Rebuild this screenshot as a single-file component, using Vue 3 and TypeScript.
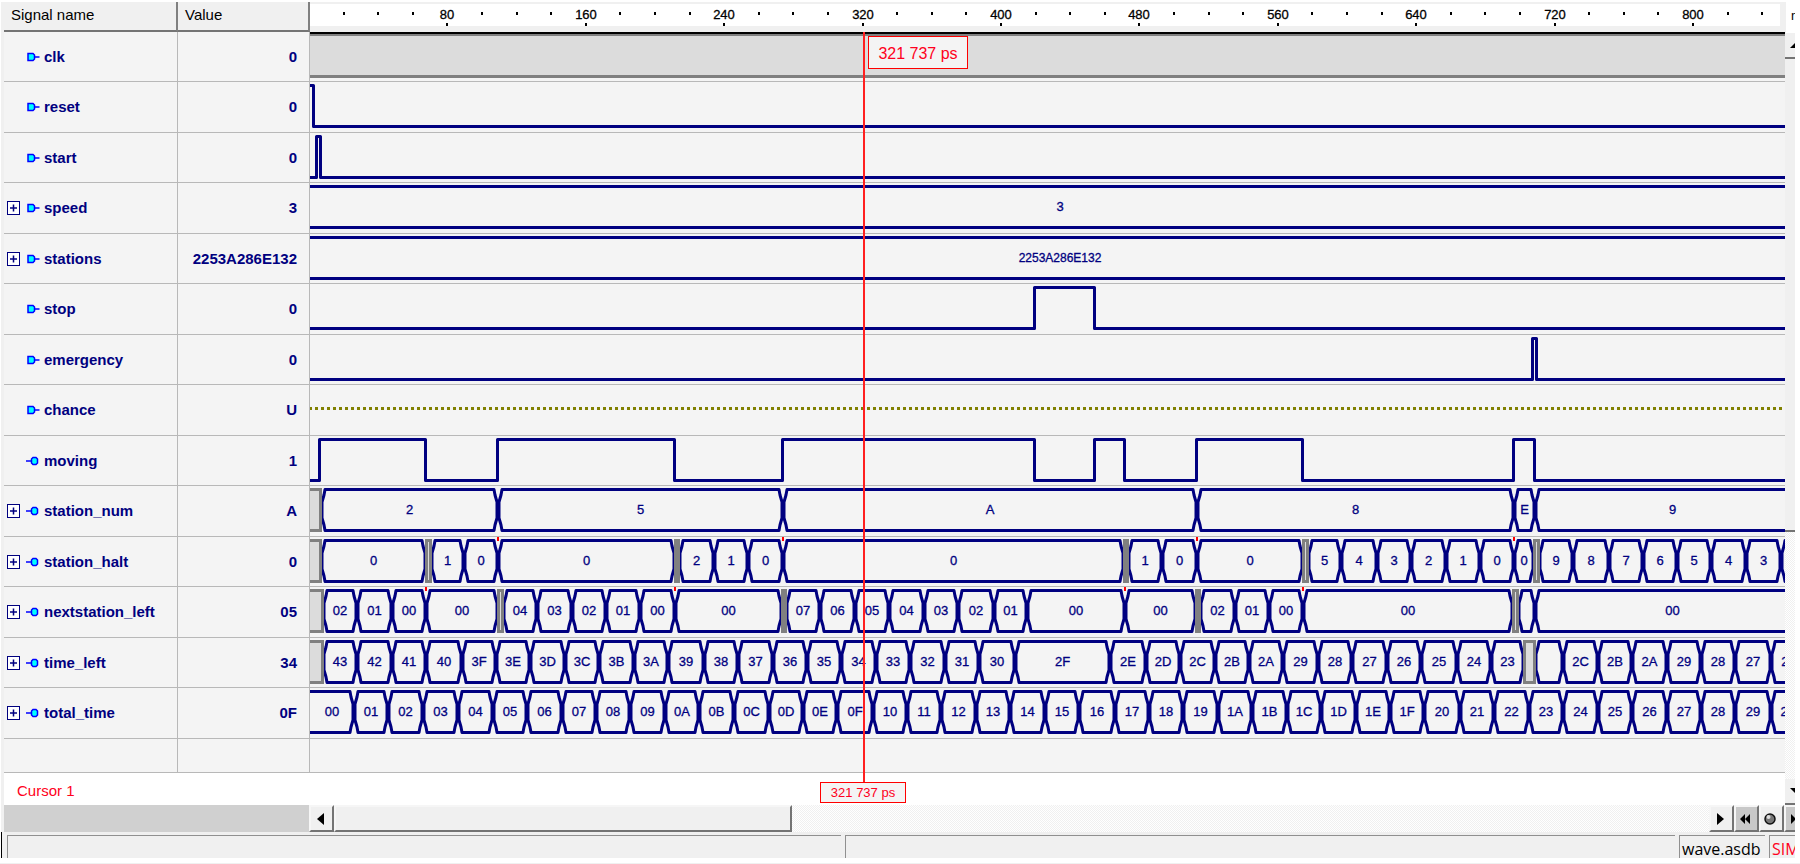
<script setup lang="ts">
type Direction = 'in' | 'out'

interface Segment {
  from: number
  to: number
  label: string
  undef?: boolean
}

interface Signal {
  name: string
  value: string
  direction: Direction
  expandable?: boolean
  kind: 'clock' | 'bit' | 'bus' | 'floating'
  startHigh?: boolean
  edges?: number[]
  segments?: Segment[]
  marks?: number[]
}

const ORIGIN = 310
const FAR = 1810
const HIGH = 3.5
const LOW = 44.5

/* "end:label" pairs; a leading "~" marks an undefined stretch */
function bus(start: number, source: string): Segment[] {
  let from = start
  return source.split(' ').map((item) => {
    const undef = item.startsWith('~')
    const [end, label = ''] = item.replace('~', '').split(':')
    const segment = { from: from - ORIGIN, to: Number(end) - ORIGIN, label, undef }
    from = Number(end)
    return segment
  })
}

const signals: Signal[] = [
  { name: 'clk', value: '0', direction: 'in', kind: 'clock' },
  { name: 'reset', value: '0', direction: 'in', kind: 'bit', startHigh: true, edges: [313] },
  { name: 'start', value: '0', direction: 'in', kind: 'bit', edges: [316, 320] },
  { name: 'speed', value: '3', direction: 'in', expandable: true, kind: 'bus', segments: bus(300, '1820:3') },
  {
    name: 'stations', value: '2253A286E132', direction: 'in', expandable: true, kind: 'bus',
    segments: bus(300, '1820:2253A286E132'),
  },
  { name: 'stop', value: '0', direction: 'in', kind: 'bit', edges: [1034, 1094] },
  { name: 'emergency', value: '0', direction: 'in', kind: 'bit', edges: [1532, 1536] },
  { name: 'chance', value: 'U', direction: 'in', kind: 'floating' },
  {
    name: 'moving', value: '1', direction: 'out', kind: 'bit',
    edges: [319, 425, 497, 674, 782, 1034, 1094, 1124, 1196, 1302, 1513, 1534],
  },
  {
    name: 'station_num', value: 'A', direction: 'out', expandable: true, kind: 'bus',
    segments: bus(300, '~321 498:2 783:5 1197:A 1514:8 1535:E 1810:9'),
  },
  {
    name: 'station_halt', value: '0', direction: 'out', expandable: true, kind: 'bus',
    segments: bus(300,
      '~321 426:0 ~431 464:1 498:0 675:0 ~679 714:2 748:1 783:0 1124:0 ~1128 1162:1 1197:0 1303:0 ~1308 '
      + '1341:5 1377:4 1411:3 1446:2 1480:1 1514:0 1534:0 ~1539 1573:9 1609:8 1643:7 1677:6 1711:5 1746:4 1781:3 1815'),
    marks: [498, 783, 1197, 1514],
  },
  {
    name: 'nextstation_left', value: '05', direction: 'out', expandable: true, kind: 'bus',
    segments: bus(300,
      '~323 357:02 392:01 426:00 498:00 ~503 537:04 572:03 606:02 640:01 675:00 782:00 ~786 '
      + '820:07 855:06 889:05 924:04 958:03 994:02 1027:01 1125:00 1196:00 ~1200 1235:02 1269:01 1303:00 '
      + '1513:00 ~1518 1535 1810:00'),
    marks: [426, 675, 1125, 1303],
  },
  {
    name: 'time_left', value: '34', direction: 'out', expandable: true, kind: 'bus',
    segments: bus(300,
      '~323 357:43 392:42 426:41 462:40 496:3F 530:3E 565:3D 599:3C 634:3B 668:3A 704:39 738:38 773:37 807:36 '
      + '841:35 876:34 910:33 945:32 979:31 1015:30 1110:2F 1146:2E 1180:2D 1215:2C 1249:2B 1283:2A 1318:29 '
      + '1352:28 1387:27 1421:26 1457:25 1491:24 1524:23 ~1535 1563 1598:2C 1632:2B 1667:2A 1701:29 1735:28 '
      + '1771:27 1806:26'),
  },
  {
    name: 'total_time', value: '0F', direction: 'out', expandable: true, kind: 'bus',
    segments: bus(310,
      '354:00 388:01 423:02 458:03 493:04 527:05 562:06 596:07 630:08 665:09 699:0A 734:0B 769:0C 803:0D '
      + '837:0E 873:0F 907:10 941:11 976:12 1010:13 1045:14 1079:15 1115:16 1149:17 1183:18 1218:19 1252:1A '
      + '1287:1B 1321:1C 1356:1D 1390:1E 1424:1F 1460:20 1494:21 1529:22 1563:23 1598:24 1632:25 1667:26 '
      + '1701:27 1735:28 1771:29 1806:2A'),
  },
]

function bitPath(signal: Signal): string {
  let high = Boolean(signal.startHigh)
  let d = `M-4 ${high ? HIGH : LOW}`
  for (const edge of signal.edges ?? []) {
    d += `H${edge - ORIGIN + 0.5}`
    high = !high
    d += `V${high ? HIGH : LOW}`
  }
  return d + `H${FAR}`
}

function cellPath(s: Segment): string {
  const open = s.from <= 0
  const a = s.from
  const b = s.to
  const right = `H${b - 4}L${b - 3} 9L${b - 1} 16V32L${b - 3} 39L${b - 4} ${LOW}`
  if (open) return `M-4 ${HIGH}${right}H-4`
  return `M${a + 4} ${HIGH}${right}H${a + 4}L${a + 3} 39L${a + 1} 32V16L${a + 3} 9Z`
}

const known = (s: Signal) => (s.segments ?? []).filter((x) => !x.undef)
const undefinedParts = (s: Signal) => (s.segments ?? []).filter((x) => x.undef)

const PER_NS = 1.73
const ticks = Array.from({ length: 42 }, (_, i) => {
  const time = (i + 1) * 20
  return { time, x: Math.round(time * PER_NS - 2), major: time % 80 === 0 }
})
</script>

<template>
  <main class="window">
    <div class="viewer">
      <section class="scope">
        <table class="signals">
          <colgroup>
            <col class="name-col" />
            <col class="value-col" />
            <col />
          </colgroup>
          <thead>
            <tr>
              <th class="head" scope="col">Signal name</th>
              <th class="head" scope="col">Value</th>
              <th class="ruler" scope="col" aria-label="Time ruler">
                <div class="scale">
                  <svg class="trace" height="22">
                    <g v-for="t in ticks" :key="t.time">
                      <rect :x="t.x" :y="t.major ? 19 : 8" width="2" height="3" />
                      <text v-if="t.major" class="tick" :x="t.x + 1" y="15">{{ t.time }}</text>
                    </g>
                  </svg>
                </div>
              </th>
            </tr>
          </thead>
          <tbody>
            <tr v-for="s in signals" :key="s.name">
              <td class="cell">
                <div class="name">
                  <span class="slot">
                    <button v-if="s.expandable" class="expand" type="button" :aria-label="'Expand ' + s.name">
                      <svg width="9" height="10" viewBox="0 0 9 10"><path d="M1 5H8M4.500 1.500V8.500" /></svg>
                    </button>
                  </span>
                  <svg v-if="s.direction === 'in'" class="pin" width="14" height="10" viewBox="0 0 14 10">
                    <path d="M2 1.500H7L8.500 3V7L7 8.500H2Z" />
                    <path d="M9 5H13.500" />
                  </svg>
                  <svg v-else class="pin" width="14" height="10" viewBox="0 0 14 10">
                    <path d="M0 5H5" />
                    <path d="M7 1.500H10L11.500 3V7L10 8.500H7L5.500 7V3Z" />
                  </svg>
                  <span>{{ s.name }}</span>
                </div>
              </td>
              <td class="cell value">{{ s.value }}</td>
              <td class="wave">
                <svg class="trace" height="49">
                  <template v-if="s.kind === 'clock'">
                    <rect class="shade" x="0" y="3" width="100%" height="42" />
                    <rect class="grey" x="0" y="2" width="100%" height="2" />
                    <rect class="grey" x="0" y="43" width="100%" height="3" />
                    <rect x="0" y="0" width="100%" height="2" />
                  </template>
                  <path v-else-if="s.kind === 'bit'" class="line" :d="bitPath(s)" />
                  <path v-else-if="s.kind === 'floating'" class="dots" :d="'M-1 23.5H' + FAR" />
                  <template v-else>
                    <path v-for="c in known(s)" :key="c.from" class="line" :d="cellPath(c)" />
                    <rect
                      v-for="c in undefinedParts(s)"
                      :key="'u' + c.from"
                      class="unknown"
                      :x="c.from + 0.5"
                      :y="HIGH"
                      :width="c.to - c.from - 1"
                      :height="LOW - HIGH"
                    />
                    <text
                      v-for="c in known(s)"
                      :key="'t' + c.from"
                      class="label"
                      :class="{ long: c.label.length > 2 }"
                      :x="(c.from + c.to) / 2"
                      y="28"
                    >{{ c.label }}</text>
                    <rect
                      v-for="m in s.marks ?? []"
                      :key="'m' + m"
                      class="mark"
                      :x="m - ORIGIN - 1"
                      y="0"
                      width="2"
                      height="4"
                    />
                  </template>
                </svg>
              </td>
            </tr>
            <tr class="spare">
              <td class="cell"></td>
              <td class="cell"></td>
              <td class="wave"></td>
            </tr>
          </tbody>
        </table>
        <div class="cursor-row">Cursor 1</div>
        <div class="cursor-line"></div>
        <output class="flag">321 737 ps</output>
        <output class="foot">321 737 ps</output>
      </section>
      <aside class="vscroll">
        <div class="unit">ns</div>
        <button class="up" type="button" aria-label="Scroll up">
          <svg width="12" height="6" viewBox="0 0 12 6"><path d="M6 0L12 6H0Z" /></svg>
        </button>
        <div class="vthumb"></div>
        <div class="vtrack"></div>
        <button class="down" type="button" aria-label="Scroll down">
          <svg width="12" height="6" viewBox="0 0 12 6"><path d="M0 0H12L6 6Z" /></svg>
        </button>
      </aside>
    </div>

    <div class="hscroll">
      <div class="filler"></div>
      <button class="btn" type="button" aria-label="Scroll left">
        <svg width="7" height="12" viewBox="0 0 7 12"><path d="M7 0V12L0 6Z" /></svg>
      </button>
      <button class="btn thumb" type="button" aria-label="Scroll thumb"></button>
      <div class="track"></div>
      <button class="btn" type="button" aria-label="Scroll right">
        <svg width="7" height="12" viewBox="0 0 7 12"><path d="M0 0L7 6L0 12Z" /></svg>
      </button>
      <button class="btn dark" type="button" aria-label="Previous">
        <svg width="10" height="10" viewBox="0 0 10 10"><path d="M5 0V10L0 5ZM10 0V10L5 5Z" /></svg>
      </button>
      <button class="btn" type="button" aria-label="Centre on cursor">
        <svg width="12" height="12" viewBox="0 0 12 12">
          <circle cx="6" cy="6" r="5" fill="#777" stroke="#111" stroke-width="1.500" />
          <circle cx="4.500" cy="4" r="2" fill="#ddd" />
        </svg>
      </button>
      <button class="btn dark last" type="button" aria-label="Next">
        <svg width="10" height="10" viewBox="0 0 10 10"><path d="M0 0L5 5L0 10ZM5 0L10 5L5 10Z" /></svg>
      </button>
    </div>

    <footer class="status">
      <div class="pane left"></div>
      <div class="pane wide"></div>
      <div class="pane file">wave.asdb</div>
      <div class="pane mode">SIM</div>
    </footer>
    <div class="edge"></div>
  </main>
</template>

<style>
body {
  margin: 0;
  background: #fff;
}
</style>

<style scoped>
.window {
  box-sizing: border-box;
  padding-top: 2px;
  font: 15px/20px "Liberation Sans", Arial, sans-serif;
  color: #000;
  overflow: hidden;
}
button {
  box-sizing: border-box;
  margin: 0;
  padding: 0;
  border: 0;
  border-radius: 0;
  background: #f0f0f0;
}
svg {
  flex: none;
}
.viewer {
  display: flex;
  margin: 0 5px 0 1px;
  padding-left: 3px;
  background: #f0f0f0;
}
.scope {
  position: relative;
  flex: 1;
  min-width: 0;
}
.signals {
  width: 100%;
  table-layout: fixed;
  border-collapse: separate;
  border-spacing: 0;
}
.name-col {
  width: 174px;
}
.value-col {
  width: 132px;
}
th,
td {
  box-sizing: border-box;
  padding: 0;
}
.head {
  height: 30px;
  padding: 0 0 2px 7px;
  border-right: 2px solid #808080;
  border-bottom: 2px solid #747474;
  background: #f0f0f0;
  font-weight: 400;
  text-align: left;
}
.ruler {
  height: 30px;
  border-top: 1px solid #f0f0f0;
  background: #f0f0f0;
  vertical-align: top;
  font-weight: 400;
}
.scale {
  margin: 1px 5px 0 0;
  background: #fff;
}
.trace {
  display: block;
  width: 100%;
  overflow: hidden;
}
.tick,
.label {
  font-size: 13px;
  text-anchor: middle;
  stroke-width: 0.3px;
}
.tick {
  stroke: #000;
}
.label {
  fill: #000080;
  stroke: #000080;
}
.long {
  font-size: 12px;
}
.cell,
.wave {
  height: 50px;
  border-bottom: 1px solid #b8b8b8;
  background: #f4f4f4;
}
tr:nth-child(even) .cell,
tr:nth-child(even) .wave {
  height: 51px;
}
tr.spare .cell,
tr.spare .wave {
  height: 34px;
}
.cell {
  border-right: 1px solid #b8b8b8;
  color: #000080;
  font-weight: 700;
}
.wave {
  vertical-align: top;
}
.name {
  display: flex;
  align-items: center;
  gap: 4px;
  padding-left: 3px;
}
.slot {
  display: flex;
  width: 15px;
}
.expand {
  display: flex;
  align-items: center;
  justify-content: center;
  width: 13px;
  height: 14px;
  border: 1px solid #000080;
  background: #fff;
}
.expand path {
  stroke: #000080;
  stroke-width: 1.5;
}
.pin {
  stroke: #0000ff;
  stroke-width: 1.5;
  fill: #00ffff;
}
.value {
  padding-right: 12px;
  text-align: right;
}
.line {
  fill: none;
  stroke: #000080;
  stroke-width: 3;
  stroke-linejoin: round;
}
.dots {
  fill: none;
  stroke: #808000;
  stroke-width: 3;
  stroke-dasharray: 3 3;
}
.unknown {
  fill: #dcdcdc;
  stroke: #808080;
  stroke-width: 3;
}
.shade {
  fill: #dcdcdc;
}
.grey {
  fill: #808080;
}
.mark {
  fill: #ff0000;
}
.cursor-row {
  height: 32px;
  box-sizing: border-box;
  padding: 8px 0 0 13px;
  background: #fff;
  color: #ff0020;
}
.cursor-line {
  position: absolute;
  top: 30px;
  bottom: 22px;
  left: 859px;
  width: 2px;
  background: #ff2020;
}
.flag,
.foot {
  position: absolute;
  box-sizing: border-box;
  background: #f4f4f4;
  color: #ff0020;
  text-align: center;
  white-space: nowrap;
}
.flag {
  top: 34px;
  left: 864px;
  width: 100px;
  padding-top: 2px;
  border: 1px solid #ff0000;
  font-size: 16px;
  line-height: 29px;
}
.foot {
  bottom: 2px;
  left: 816px;
  width: 86px;
  padding-top: 1px;
  border: 1px solid #ff0000;
  font-size: 13px;
  line-height: 18px;
}
.vscroll {
  display: flex;
  flex-direction: column;
  width: 10px;
  overflow: hidden;
  background: #f0f0f0;
}
.unit {
  height: 31px;
  padding: 2px 0 0 5px;
  box-sizing: border-box;
  margin-left: 1px;
  background: #fff;
  font-size: 13px;
  line-height: 24px;
}
.up,
.down {
  display: flex;
  align-items: center;
  flex: none;
  width: 25px;
  height: 26px;
  padding-left: 5px;
  border-bottom: 2px solid #747474;
}
.vthumb {
  flex: 472 1 0;
  border-bottom: 2px solid #747474;
}
.vtrack {
  flex: 248 1 0;
}
.track,
.vtrack {
  background: repeating-conic-gradient(#f0f0f0 0 25%, #fff 0 50%) 0 0 / 2px 2px;
}
.hscroll {
  display: flex;
  height: 27px;
  margin: 0 5px 0 1px;
  padding-left: 3px;
  background: #f0f0f0;
}
.filler {
  width: 305px;
  background: #d0d0d0;
}
.btn {
  display: flex;
  align-items: center;
  justify-content: center;
  flex: none;
  width: 25px;
  height: 27px;
  padding-right: 3px;
  border: 2px solid #747474;
  border-top-color: #f6f6f6;
  border-left-color: #f6f6f6;
}
.thumb {
  width: 458px;
}
.dark {
  background: #c8c8c8;
}
.last {
  width: 11px;
  border-right: 0;
  justify-content: flex-start;
  padding: 0 0 0 5px;
  overflow: hidden;
}
.track {
  flex: 1;
}
.status {
  display: flex;
  gap: 4px;
  height: 26px;
  box-sizing: border-box;
  margin: 0 5px 0 1px;
  padding: 3px 0 0 5px;
  border-left: 1px solid #000;
  background: #f0f0f0;
  font-family: "Open Sans", "Noto Sans", sans-serif;
  font-size: 16px;
  line-height: 26px;
  white-space: nowrap;
}
.pane {
  box-sizing: border-box;
  border-top: 1px solid #909090;
  border-left: 1px solid #909090;
  overflow: hidden;
}
.left {
  flex: 834 1 0;
}
.wide {
  flex: 831 1 0;
}
.file {
  width: 86px;
  padding-left: 2px;
}
.mode {
  width: 26px;
  padding-left: 2px;
  color: #ff0020;
}
.edge {
  margin-top: 5px;
  border-top: 1px solid #f0f0f0;
}
</style>
